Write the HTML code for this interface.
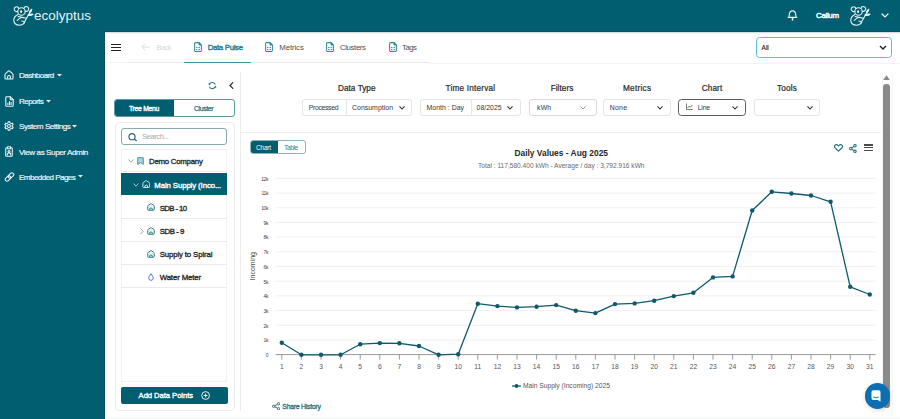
<!DOCTYPE html>
<html><head><meta charset="utf-8">
<style>
*{box-sizing:border-box;margin:0;padding:0}
html,body{width:900px;height:419px;overflow:hidden}
body{position:relative;background:#015e71;font-family:"Liberation Sans",sans-serif;color:#333}
.abs{position:absolute}
.t{position:absolute;white-space:nowrap;line-height:1}
#content{left:105px;top:32px;width:795px;height:387px;background:#fff}
.side{color:#eef5f5;font-size:7.3px;-webkit-text-stroke-width:0.2px}
.box{position:absolute;border:1px solid #e4e4e4;border-radius:3px;background:#fff}
.lbl{font-size:8.1px;font-weight:normal;color:#2a2a2a;-webkit-text-stroke:0.22px #2a2a2a}
.sm{font-size:6.9px;color:#363636}
.sb{font-weight:normal;-webkit-text-stroke-width:0.35px}
.row{position:absolute;left:121px;width:106px;height:23.3px;border-bottom:1px solid #ebebeb}
</style></head><body>
<!-- header -->
<div class="abs" style="left:10px;top:3px;width:26px;height:25px"><svg width="26" height="25" viewBox="0 0 26 25" fill="none" stroke="#e6f2f2" stroke-width="1.1" stroke-linecap="round" stroke-linejoin="round">
<path d="M8.9 5.5 A2.4 2.4 0 1 0 7.7 8.3"/>
<path d="M14 5.3 A2.4 2.4 0 1 1 15.3 8.1"/>
<ellipse cx="11.5" cy="8.5" rx="3.7" ry="3.8"/>
<ellipse cx="11.1" cy="8.7" rx="1.05" ry="1.35" fill="#e6f2f2" stroke="none"/>
<path d="M8 11.6 Q3.6 13.8 3.8 17.6 Q4.2 22.2 9.6 22.2 Q13.2 22.1 14.6 19.6"/>
<path d="M8.2 13.5 Q12 14.4 16.4 15.2"/>
<path d="M7.2 17.4 Q9.4 15.4 11.4 14.6"/>
<path d="M11.8 18 Q13.6 18 14.6 19.6"/>
<path d="M14.2 19.4 L21.2 7"/>
<path d="M19.5 9.6 Q19.9 7.2 21.8 6.2 Q21.7 8.8 19.5 9.6Z"/>
<path d="M18 12.1 Q20.6 10.7 23 11.3 Q20.8 12.9 18 12.1Z"/>
</svg>
</div>
<div class="t" style="left:34px;top:9.20px;font-size:13.5px;color:#e6f2f2">ecolyptus</div>
<svg class="abs" style="left:787px;top:10px" width="11" height="11" viewBox="0 0 11 11" fill="none" stroke="#eef6f6" stroke-width="1.1" stroke-linecap="round" stroke-linejoin="round">
  <path d="M2 7.3 L2.3 4.2 Q2.7 0.9 5.5 0.9 Q8.3 0.9 8.7 4.2 L9 7.3"/><path d="M1.2 7.4 L9.8 7.4"/><path d="M5.5 8.6 L5.5 9.9" stroke-width="1.5"/>
</svg>
<div class="t sb" style="letter-spacing:-0.312px;left:816px;top:12.21px;font-size:7.9px;color:#fff;-webkit-text-stroke-width:0.45px">Callum</div>
<div class="abs" style="left:847px;top:3px;width:26px;height:25px"><svg width="26" height="25" viewBox="0 0 26 25" fill="none" stroke="#e6f2f2" stroke-width="1.1" stroke-linecap="round" stroke-linejoin="round">
<path d="M8.9 5.5 A2.4 2.4 0 1 0 7.7 8.3"/>
<path d="M14 5.3 A2.4 2.4 0 1 1 15.3 8.1"/>
<ellipse cx="11.5" cy="8.5" rx="3.7" ry="3.8"/>
<ellipse cx="11.1" cy="8.7" rx="1.05" ry="1.35" fill="#e6f2f2" stroke="none"/>
<path d="M8 11.6 Q3.6 13.8 3.8 17.6 Q4.2 22.2 9.6 22.2 Q13.2 22.1 14.6 19.6"/>
<path d="M8.2 13.5 Q12 14.4 16.4 15.2"/>
<path d="M7.2 17.4 Q9.4 15.4 11.4 14.6"/>
<path d="M11.8 18 Q13.6 18 14.6 19.6"/>
<path d="M14.2 19.4 L21.2 7"/>
<path d="M19.5 9.6 Q19.9 7.2 21.8 6.2 Q21.7 8.8 19.5 9.6Z"/>
<path d="M18 12.1 Q20.6 10.7 23 11.3 Q20.8 12.9 18 12.1Z"/>
</svg>
</div>
<svg class="abs" style="left:881.2px;top:13.3px" width="8" height="5" viewBox="0 0 8 5" fill="none" stroke="#fff" stroke-width="1.2" stroke-linecap="round"><path d="M1 1 L4 3.9 L7 1"/></svg>

<!-- sidebar -->
<svg class="abs" style="left:4.4px;top:70.3px" width="10" height="10" viewBox="0 0 10 10" fill="none" stroke="#eef6f6" stroke-width="1.1" stroke-linejoin="round"><path d="M1 4.6 Q1 4 1.5 3.6 L4.3 1.2 Q5 0.6 5.7 1.2 L8.5 3.6 Q9 4 9 4.6 L9 8.3 Q9 9 8.3 9 L1.7 9 Q1 9 1 8.3 Z"/><path d="M3.6 9 L3.6 6.7 Q3.6 5.5 5 5.5 Q6.4 5.5 6.4 6.7 L6.4 9"/></svg>
<div class="t side" style="letter-spacing:-0.539px;left:19px;top:72.30px;font-size:8.1px">Dashboard</div>
<svg class="abs" style="left:57.3px;top:74px" width="5" height="3"><path d="M0 0 L5 0 L2.5 2.6Z" fill="#e6f1f2"/></svg>

<svg class="abs" style="left:5px;top:95.6px" width="9" height="11" viewBox="0 0 9 11" fill="none" stroke="#eef6f6" stroke-width="1.1" stroke-linejoin="round" stroke-linecap="round"><path d="M1.6 0.8 L5.3 0.8 L8.2 3.7 L8.2 9.4 Q8.2 10.2 7.4 10.2 L1.6 10.2 Q0.8 10.2 0.8 9.4 L0.8 1.6 Q0.8 0.8 1.6 0.8Z"/><path d="M5.3 0.8 L5.3 3 Q5.3 3.7 6 3.7 L8.2 3.7"/><path d="M2.9 8.4 L2.9 7.2 M4.5 8.4 L4.5 5.6 M6.1 8.4 L6.1 6.6"/></svg>
<div class="t side" style="letter-spacing:-0.607px;left:19px;top:98.02px;font-size:8.1px">Reports</div>
<svg class="abs" style="left:46.3px;top:99.6px" width="5" height="3"><path d="M0 0 L5 0 L2.5 2.6Z" fill="#e6f1f2"/></svg>

<svg class="abs" style="left:3.6px;top:121.4px" width="10" height="10" viewBox="0 0 10 10" fill="none" stroke="#eef6f6" stroke-width="1.05" stroke-linejoin="round"><circle cx="5" cy="5" r="1.5"/><path d="M4.06 1.84 L4.20 0.67 L5.80 0.67 L5.94 1.84 L7.27 2.61 L8.35 2.14 L9.15 3.53 L8.21 4.23 L8.21 5.77 L9.15 6.47 L8.35 7.86 L7.27 7.39 L5.94 8.16 L5.80 9.33 L4.20 9.33 L4.06 8.16 L2.73 7.39 L1.65 7.86 L0.85 6.47 L1.79 5.77 L1.79 4.23 L0.85 3.53 L1.65 2.14 L2.73 2.61Z"/></svg>
<div class="t side" style="letter-spacing:-0.477px;left:19px;top:123.11px;font-size:8.1px">System Settings</div>
<svg class="abs" style="left:72.3px;top:124.8px" width="5" height="3"><path d="M0 0 L5 0 L2.5 2.6Z" fill="#e6f1f2"/></svg>

<svg class="abs" style="left:5.3px;top:146px" width="8" height="11" viewBox="0 0 8 11" fill="none" stroke="#eef6f6" stroke-width="1.05" stroke-linejoin="round" stroke-linecap="round"><path d="M2.4 1.8 L1.5 1.8 Q0.7 1.8 0.7 2.6 L0.7 9.6 Q0.7 10.3 1.5 10.3 L6.5 10.3 Q7.3 10.3 7.3 9.6 L7.3 2.6 Q7.3 1.8 6.5 1.8 L5.6 1.8"/><path d="M2.4 0.7 L5.6 0.7 L5.6 2.8 L2.4 2.8 Z"/><circle cx="4" cy="5.4" r="1"/><path d="M2.3 9 L2.3 8.2 Q2.3 7 4 7 Q5.7 7 5.7 8.2 L5.7 9"/></svg>
<div class="t side" style="letter-spacing:-0.416px;left:19px;top:148.71px;font-size:8.1px">View as Super Admin</div>

<svg class="abs" style="left:4px;top:171.5px" width="11" height="10" viewBox="0 0 11 10" fill="none" stroke="#eef6f6" stroke-width="1.05"><g transform="rotate(-45 5.5 5)"><rect x="0.3" y="3.2" width="6.2" height="3.6" rx="1.8"/><rect x="4.5" y="3.2" width="6.2" height="3.6" rx="1.8"/></g></svg>
<div class="t side" style="letter-spacing:-0.581px;left:19px;top:173.61px;font-size:8.1px">Embedded Pages</div>
<svg class="abs" style="left:77.8px;top:175.2px" width="5" height="3"><path d="M0 0 L5 0 L2.5 2.6Z" fill="#e6f1f2"/></svg>

<!-- content -->
<div id="content" class="abs"></div>
<div class="abs" style="left:104px;top:32px;width:1px;height:387px;background:#02525f"></div>
<div class="abs" style="left:104px;top:31px;width:796px;height:1px;background:#02535f"></div>
<div class="abs" style="left:105px;top:32px;width:795px;height:1px;background:#cfdfe2"></div>
<div class="abs" style="left:105px;top:33px;width:795px;height:1px;background:#f7f5f6"></div>
<!-- tab bar -->
<div class="abs" style="left:111px;top:43.8px;width:10px;height:1.3px;background:#222"></div>
<div class="abs" style="left:111px;top:46.9px;width:10px;height:1.3px;background:#222"></div>
<div class="abs" style="left:111px;top:50px;width:10px;height:1.3px;background:#222"></div>

<div class="abs" style="left:107px;top:62px;width:20px;height:1px;background:#f4f4f4"></div>
<div class="abs" style="left:127px;top:62px;width:303px;height:1px;background:#e9e9e9"></div>
<div class="abs" style="left:430px;top:62.5px;width:470px;height:1px;background:#f3f3f3"></div>
<div class="abs" style="left:184px;top:61.5px;width:67px;height:1.6px;background:#3a93a0"></div>

<svg class="abs" style="left:141px;top:43px" width="9" height="8" viewBox="0 0 9 8" fill="none" stroke="#d8dcdd" stroke-width="1"><path d="M8.5 4 L1 4 M4 0.8 L0.8 4 L4 7.2"/></svg>
<div class="t" style="letter-spacing:-0.715px;left:156.4px;top:43.81px;font-size:7.8px;color:#d6dadb">Back</div>

<svg class="abs" style="left:194.0px;top:42px" width="8" height="10" viewBox="0 0 8 10" fill="none" stroke="#2f8a96" stroke-width="1.05" stroke-linejoin="round"><path d="M1.5 0.6 L5 0.6 L7.4 3 L7.4 8.6 Q7.4 9.4 6.6 9.4 L1.4 9.4 Q0.6 9.4 0.6 8.6 L0.6 1.4 Q0.6 0.6 1.5 0.6Z"/><path d="M5 0.6 L5 2.3 Q5 3 5.7 3 L7.4 3Z" fill="#2f8a96"/><g fill="#2f8a96" stroke="none"><rect x="2.1" y="4.9" width="1.3" height="1.2"/><rect x="4.6" y="4.9" width="1.3" height="1.2"/><rect x="2.1" y="7" width="1.3" height="1.2"/><rect x="4.6" y="7" width="1.3" height="1.2"/></g></svg>
<div class="t sb" style="letter-spacing:-0.316px;left:207.7px;top:43.81px;font-size:7.8px;color:#26808c;-webkit-text-stroke-width:0.4px">Data Pulse</div>

<svg class="abs" style="left:265.3px;top:42px" width="8" height="10" viewBox="0 0 8 10" fill="none" stroke="#2f8a96" stroke-width="1.05" stroke-linejoin="round"><path d="M1.5 0.6 L5 0.6 L7.4 3 L7.4 8.6 Q7.4 9.4 6.6 9.4 L1.4 9.4 Q0.6 9.4 0.6 8.6 L0.6 1.4 Q0.6 0.6 1.5 0.6Z"/><path d="M5 0.6 L5 2.3 Q5 3 5.7 3 L7.4 3Z" fill="#2f8a96"/><g fill="#2f8a96" stroke="none"><rect x="2.1" y="4.9" width="1.3" height="1.2"/><rect x="4.6" y="4.9" width="1.3" height="1.2"/><rect x="2.1" y="7" width="1.3" height="1.2"/><rect x="4.6" y="7" width="1.3" height="1.2"/></g></svg>
<div class="t" style="letter-spacing:-0.104px;left:279.3px;top:43.81px;font-size:7.8px;color:#505050">Metrics</div>

<svg class="abs" style="left:326.3px;top:42px" width="8" height="10" viewBox="0 0 8 10" fill="none" stroke="#2f8a96" stroke-width="1.05" stroke-linejoin="round"><path d="M1.5 0.6 L5 0.6 L7.4 3 L7.4 8.6 Q7.4 9.4 6.6 9.4 L1.4 9.4 Q0.6 9.4 0.6 8.6 L0.6 1.4 Q0.6 0.6 1.5 0.6Z"/><path d="M5 0.6 L5 2.3 Q5 3 5.7 3 L7.4 3Z" fill="#2f8a96"/><g fill="#2f8a96" stroke="none"><rect x="2.1" y="4.9" width="1.3" height="1.2"/><rect x="4.6" y="4.9" width="1.3" height="1.2"/><rect x="2.1" y="7" width="1.3" height="1.2"/><rect x="4.6" y="7" width="1.3" height="1.2"/></g></svg>
<div class="t" style="letter-spacing:-0.373px;left:340px;top:43.81px;font-size:7.8px;color:#505050">Clusters</div>

<svg class="abs" style="left:388.5px;top:42px" width="8" height="10" viewBox="0 0 8 10" fill="none" stroke="#2f8a96" stroke-width="1.05" stroke-linejoin="round"><path d="M1.5 0.6 L5 0.6 L7.4 3 L7.4 8.6 Q7.4 9.4 6.6 9.4 L1.4 9.4 Q0.6 9.4 0.6 8.6 L0.6 1.4 Q0.6 0.6 1.5 0.6Z"/><path d="M5 0.6 L5 2.3 Q5 3 5.7 3 L7.4 3Z" fill="#2f8a96"/><g fill="#2f8a96" stroke="none"><rect x="2.1" y="4.9" width="1.3" height="1.2"/><rect x="4.6" y="4.9" width="1.3" height="1.2"/><rect x="2.1" y="7" width="1.3" height="1.2"/><rect x="4.6" y="7" width="1.3" height="1.2"/></g></svg>
<div class="t" style="letter-spacing:-0.495px;left:402px;top:43.81px;font-size:7.8px;color:#505050">Tags</div>

<div class="abs" style="left:756.1px;top:37.1px;width:136.4px;height:20.9px;border:1.5px solid #58c3d0;border-radius:3.5px"></div>
<div class="t" style="left:761.6px;top:44.91px;font-size:6.5px;color:#222;-webkit-text-stroke:0.15px #222">All</div>
<svg class="abs" style="left:878.5px;top:45.3px" width="8" height="5" viewBox="0 0 8 5" fill="none" stroke="#222" stroke-width="1.4"><path d="M1 1 L4 4 L7 1"/></svg>

<!-- tree panel -->
<svg class="abs" style="left:207.5px;top:80.5px" width="9" height="9" viewBox="0 0 9 9" fill="none" stroke="#2b7a86" stroke-width="1.1"><path d="M7.35 3.46 A3.2 3.2 0 0 0 1.6 3.1"/><path d="M1.35 5.64 A3.2 3.2 0 0 0 7.1 6"/><path d="M0.3 2.2 L2.9 2.6 L1.2 4.5Z" fill="#2b7a86" stroke="none"/><path d="M8.5 6.8 L5.9 6.4 L7.6 4.5Z" fill="#2b7a86" stroke="none"/></svg>
<svg class="abs" style="left:229px;top:82px" width="5" height="7" viewBox="0 0 5 7" fill="none" stroke="#222" stroke-width="1.15" stroke-linecap="round"><path d="M3.8 0.7 L0.9 3.5 L3.8 6.3"/></svg>

<div class="abs" style="left:114px;top:99px;width:120.5px;height:18px;border:1px solid #5e9aa3;border-radius:3px;overflow:hidden">
  <div class="abs" style="left:0;top:0;width:59px;height:18px;background:#015e71"></div>
</div>
<div class="t sb" style="letter-spacing:-0.291px;left:129px;top:105.70px;font-size:6.8px;color:#fff">Tree Menu</div>
<div class="t" style="letter-spacing:-0.388px;left:194px;top:105.81px;font-size:6.9px;color:#2a6f7a;-webkit-text-stroke:0.25px #2a6f7a">Cluster</div>

<div class="abs" style="left:114.5px;top:121.7px;width:120px;height:289px;border:1px solid #ececec;border-radius:4px"></div>
<div class="abs" style="left:121.2px;top:128.2px;width:106.3px;height:16.6px;border:1px solid #86aaae;border-radius:3px"></div>
<svg class="abs" style="left:127.5px;top:132.7px" width="10" height="9" viewBox="0 0 10 9" fill="none" stroke="#1f5e6a" stroke-width="1.1"><circle cx="4" cy="3.7" r="3.1"/><path d="M6.3 5.9 L8.6 8"/></svg>
<div class="t" style="letter-spacing:-0.414px;left:142.2px;top:133.40px;font-size:7.5px;color:#a9a9a9">Search...</div>

<div class="abs" style="left:121.2px;top:149.2px;width:106px;height:233px;border:1px solid #f2f2f2"></div>
<div class="row" style="top:149.2px"></div>
<svg class="abs" style="left:127.6px;top:159.3px" width="6" height="4" viewBox="0 0 6 4" fill="none" stroke="#9a9a9a" stroke-width="0.9"><path d="M0.5 0.5 L3 3.2 L5.5 0.5"/></svg>
<svg class="abs" style="left:137.2px;top:157.2px" width="7" height="8" viewBox="0 0 7 8" fill="none" stroke="#3b8f9c" stroke-width="0.9" stroke-linejoin="round"><path d="M0.7 0.7 L6.3 0.7 L6.3 7.4 L3.5 5.6 L0.7 7.4 Z" fill="#a9d4dc"/></svg>
<div class="t sb" style="letter-spacing:-0.231px;left:149px;top:158.21px;font-size:7.8px;color:#2a2a2a">Demo Company</div>

<div class="abs" style="left:121.2px;top:172.7px;width:106.2px;height:22.5px;background:#015e71"></div>
<svg class="abs" style="left:133px;top:183px" width="6" height="4" viewBox="0 0 6 4" fill="none" stroke="#b9d4d8" stroke-width="0.9"><path d="M0.5 0.5 L3 3.2 L5.5 0.5"/></svg>
<svg class="abs" style="left:141.9px;top:180.2px" width="8.5" height="8.2" viewBox="0 0 8 8" fill="none" stroke="#e9f3f4" stroke-width="0.9" stroke-linejoin="round"><path d="M0.7 3.4 Q0.7 2.8 1.2 2.4 L3.4 0.9 Q4 0.5 4.6 0.9 L6.8 2.4 Q7.3 2.8 7.3 3.4 L7.3 6.5 Q7.3 7.3 6.5 7.3 L1.5 7.3 Q0.7 7.3 0.7 6.5 Z" fill="none"/><path d="M2.7 7.3 L2.7 5.6 Q4 4.3 5.3 5.6 L5.3 7.3"/></svg>
<div class="t sb" style="letter-spacing:-0.106px;left:154.3px;top:181.51px;font-size:7.8px;color:#fff">Main Supply (Inco...</div>

<div class="row" style="top:195.3px"></div>
<svg class="abs" style="left:147.1px;top:203.4px" width="8" height="8" viewBox="0 0 8 8" fill="none" stroke="#3a8589" stroke-width="1" stroke-linejoin="round"><path d="M0.7 3.4 Q0.7 2.8 1.2 2.4 L3.4 0.9 Q4 0.5 4.6 0.9 L6.8 2.4 Q7.3 2.8 7.3 3.4 L7.3 6.5 Q7.3 7.3 6.5 7.3 L1.5 7.3 Q0.7 7.3 0.7 6.5 Z" fill="#e6f2f2"/><path d="M2.7 7.3 L2.7 5.6 Q4 4.3 5.3 5.6 L5.3 7.3"/></svg>
<div class="t sb" style="letter-spacing:-0.606px;left:159.7px;top:204.81px;font-size:7.8px;color:#2a2a2a">SDB - 10</div>
<div class="row" style="top:218.6px"></div>
<svg class="abs" style="left:139.5px;top:228.2px" width="4" height="7" viewBox="0 0 4 7" fill="none" stroke="#999" stroke-width="0.9"><path d="M0.6 0.6 L3.2 3.3 L0.6 6"/></svg>
<svg class="abs" style="left:147.1px;top:226.7px" width="8" height="8" viewBox="0 0 8 8" fill="none" stroke="#3a8589" stroke-width="1" stroke-linejoin="round"><path d="M0.7 3.4 Q0.7 2.8 1.2 2.4 L3.4 0.9 Q4 0.5 4.6 0.9 L6.8 2.4 Q7.3 2.8 7.3 3.4 L7.3 6.5 Q7.3 7.3 6.5 7.3 L1.5 7.3 Q0.7 7.3 0.7 6.5 Z" fill="#e6f2f2"/><path d="M2.7 7.3 L2.7 5.6 Q4 4.3 5.3 5.6 L5.3 7.3"/></svg>
<div class="t sb" style="letter-spacing:-0.433px;left:159.7px;top:228.01px;font-size:7.8px;color:#2a2a2a">SDB - 9</div>
<div class="row" style="top:241.9px"></div>
<svg class="abs" style="left:147.1px;top:250.0px" width="8" height="8" viewBox="0 0 8 8" fill="none" stroke="#3a8589" stroke-width="1" stroke-linejoin="round"><path d="M0.7 3.4 Q0.7 2.8 1.2 2.4 L3.4 0.9 Q4 0.5 4.6 0.9 L6.8 2.4 Q7.3 2.8 7.3 3.4 L7.3 6.5 Q7.3 7.3 6.5 7.3 L1.5 7.3 Q0.7 7.3 0.7 6.5 Z" fill="#e6f2f2"/><path d="M2.7 7.3 L2.7 5.6 Q4 4.3 5.3 5.6 L5.3 7.3"/></svg>
<div class="t sb" style="letter-spacing:-0.127px;left:159.7px;top:251.21px;font-size:7.8px;color:#2a2a2a">Supply to Spiral</div>

<div class="row" style="top:265.2px"></div>
<svg class="abs" style="left:148px;top:272.8px" width="6" height="8" viewBox="0 0 6 8" fill="none" stroke="#3a6fd0" stroke-width="0.9"><path d="M3 0.7 Q0.6 3.8 0.7 5 Q0.8 7.3 3 7.3 Q5.2 7.3 5.3 5 Q5.4 3.8 3 0.7Z"/></svg>
<div class="t sb" style="letter-spacing:-0.111px;left:159.7px;top:274.40px;font-size:7.8px;color:#2a2a2a">Water Meter</div>

<div class="abs" style="left:121px;top:387.1px;width:106.5px;height:16.7px;background:#015e71;border-radius:2px"></div>
<div class="t sb" style="letter-spacing:-0.028px;left:138.6px;top:392.11px;font-size:7.6px;color:#fff">Add Data Points</div>
<svg class="abs" style="left:200.7px;top:391px" width="9.2" height="9" viewBox="0 0 9 9" fill="none" stroke="#fff" stroke-width="0.9"><circle cx="4.5" cy="4.5" r="3.9"/><path d="M4.5 2.6 L4.5 6.4 M2.6 4.5 L6.4 4.5"/></svg>

<!-- main panel -->
<div class="abs" style="left:240px;top:71.5px;width:1px;height:339px;background:#ececec"></div>
<div class="abs" style="left:241px;top:132px;width:640px;height:1px;background:#eeeeee"></div>

<div class="t lbl" style="letter-spacing:0.041px;left:338px;top:85.10px;font-size:8.2px">Data Type</div>
<div class="box" style="left:301.5px;top:98.9px;width:110.2px;height:16.7px"></div>
<div class="abs" style="left:345.6px;top:98.9px;width:1px;height:16.7px;background:#e6e6e6"></div>
<div class="t sm" style="letter-spacing:-0.339px;left:308.7px;top:105.00px;font-size:6.9px">Processed</div>
<div class="t sm" style="letter-spacing:0.039px;left:352px;top:105.00px;font-size:6.9px">Consumption</div>
<svg class="abs" style="left:398.8px;top:106px" width="6" height="4" viewBox="0 0 6 4" fill="none" stroke="#333" stroke-width="1.05" stroke-linecap="round"><path d="M0.7 0.7 L3 3 L5.3 0.7"/></svg>

<div class="t lbl" style="letter-spacing:0.215px;left:445.6px;top:85.10px;font-size:8.2px">Time Interval</div>
<div class="box" style="left:419.6px;top:98.9px;width:101px;height:16.7px"></div>
<div class="abs" style="left:470.5px;top:98.9px;width:1px;height:16.7px;background:#e6e6e6"></div>
<div class="t sm" style="letter-spacing:0.024px;left:426.6px;top:105.00px;font-size:6.9px">Month : Day</div>
<div class="t sm" style="letter-spacing:0.013px;left:476.6px;top:105.00px;font-size:6.9px">08/2025</div>
<svg class="abs" style="left:506.9px;top:106px" width="6" height="4" viewBox="0 0 6 4" fill="none" stroke="#333" stroke-width="1.05" stroke-linecap="round"><path d="M0.7 0.7 L3 3 L5.3 0.7"/></svg>

<div class="t lbl" style="letter-spacing:0.051px;left:550.7px;top:85.10px;font-size:8.2px">Filters</div>
<div class="box" style="left:528.6px;top:98.9px;width:68.3px;height:16.7px;border-color:#d9d9d9"></div>
<div class="t sm" style="letter-spacing:0.202px;left:537px;top:105.00px;font-size:6.9px">kWh</div>
<svg class="abs" style="left:580.3px;top:106px" width="6" height="4" viewBox="0 0 6 4" fill="none" stroke="#8a8a8a" stroke-width="0.9" stroke-linecap="round"><path d="M0.7 0.7 L3 3 L5.3 0.7"/></svg>

<div class="t lbl" style="letter-spacing:0.268px;left:623px;top:85.10px;font-size:8.2px">Metrics</div>
<div class="box" style="left:603px;top:98.9px;width:67.5px;height:16.7px"></div>
<div class="t sm" style="letter-spacing:0.272px;left:609.7px;top:105.00px;font-size:6.9px">None</div>
<svg class="abs" style="left:656.5px;top:106px" width="6" height="4" viewBox="0 0 6 4" fill="none" stroke="#333" stroke-width="1.05" stroke-linecap="round"><path d="M0.7 0.7 L3 3 L5.3 0.7"/></svg>

<div class="t lbl" style="letter-spacing:0.117px;left:701.7px;top:85.10px;font-size:8.2px">Chart</div>
<div class="box" style="left:677.6px;top:98.5px;width:68.2px;height:17.2px;border:1.5px solid #5a5a5a;border-radius:3.5px"></div>
<svg class="abs" style="left:685.5px;top:103.3px" width="7" height="7" viewBox="0 0 7 7" fill="none" stroke="#555" stroke-width="0.8"><path d="M0.5 0.5 L0.5 6.5 L6.5 6.5 M1.6 5 L3 3.2 L4.5 4.2 L6.3 2"/></svg>
<div class="t sm" style="letter-spacing:-0.177px;left:697.7px;top:105.00px;font-size:6.9px">Line</div>
<svg class="abs" style="left:732px;top:106px" width="6" height="4" viewBox="0 0 6 4" fill="none" stroke="#333" stroke-width="1.05" stroke-linecap="round"><path d="M0.7 0.7 L3 3 L5.3 0.7"/></svg>

<div class="t lbl" style="letter-spacing:0.194px;left:777px;top:85.10px;font-size:8.2px">Tools</div>
<div class="box" style="left:753.7px;top:98.9px;width:66.6px;height:16.7px"></div>
<svg class="abs" style="left:806.6px;top:106px" width="6" height="4" viewBox="0 0 6 4" fill="none" stroke="#333" stroke-width="1.05" stroke-linecap="round"><path d="M0.7 0.7 L3 3 L5.3 0.7"/></svg>

<!-- chart card -->
<div class="abs" style="left:249.5px;top:140.3px;width:56px;height:13.9px;border:1px solid #8fb2b7;border-radius:3px;overflow:hidden">
  <div class="abs" style="left:0;top:0;width:27.6px;height:13.9px;background:#015e71"></div>
</div>
<div class="t" style="letter-spacing:-0.202px;left:256px;top:145.41px;font-size:6.5px;color:#fff">Chart</div>
<div class="t" style="letter-spacing:-0.462px;left:284px;top:145.41px;font-size:6.8px;color:#3f7e88">Table</div>

<div class="t" style="left:514.4px;top:149.00px;font-size:8.41px;font-weight:bold;color:#262626">Daily Values - Aug 2025</div>
<div class="t" style="left:478px;top:163.00px;font-size:6.6px;color:#6a6a6a">Total : 117,580.400 kWh - Average / day : 3,792.916 kWh</div>

<svg class="abs" style="left:834px;top:144px" width="9" height="8" viewBox="0 0 9 8" fill="none" stroke="#246f7b" stroke-width="1.1" stroke-linejoin="round"><path d="M4.5 7.2 L1.2 4 Q0 2.6 0.9 1.3 Q2.4 -0.2 4.5 1.8 Q6.6 -0.2 8.1 1.3 Q9 2.6 7.8 4 Z"/></svg>
<svg class="abs" style="left:848.5px;top:143.5px" width="8" height="9" viewBox="0 0 8 9" fill="none" stroke="#246f7b" stroke-width="1.05"><circle cx="6" cy="1.7" r="1.2"/><circle cx="6" cy="7.3" r="1.2"/><circle cx="1.8" cy="4.5" r="1.2"/><path d="M2.8 3.9 L5 2.3 M2.8 5.1 L5 6.7"/></svg>
<div class="abs" style="left:864.4px;top:144px;width:8.7px;height:1.5px;background:#4a4a4a"></div>
<div class="abs" style="left:864.4px;top:146.8px;width:8.7px;height:1.5px;background:#4a4a4a"></div>
<div class="abs" style="left:864.4px;top:149.7px;width:8.7px;height:1.5px;background:#4a4a4a"></div>

<svg class="abs" style="left:0;top:0" width="900" height="419" viewBox="0 0 900 419">
<g stroke="#f1f1f1" stroke-width="1"><line x1="275.6" x2="875.7" y1="339.92" y2="339.92"/><line x1="275.6" x2="875.7" y1="325.24" y2="325.24"/><line x1="275.6" x2="875.7" y1="310.56" y2="310.56"/><line x1="275.6" x2="875.7" y1="295.88" y2="295.88"/><line x1="275.6" x2="875.7" y1="281.20" y2="281.20"/><line x1="275.6" x2="875.7" y1="266.52" y2="266.52"/><line x1="275.6" x2="875.7" y1="251.84" y2="251.84"/><line x1="275.6" x2="875.7" y1="237.16" y2="237.16"/><line x1="275.6" x2="875.7" y1="222.48" y2="222.48"/><line x1="275.6" x2="875.7" y1="207.80" y2="207.80"/><line x1="275.6" x2="875.7" y1="193.12" y2="193.12"/><line x1="275.6" x2="875.7" y1="178.44" y2="178.44"/></g>
<g stroke="#9a9a9a" stroke-width="1"><line x1="275.6" x2="875.7" y1="354.6" y2="354.6"/><line x1="281.8" x2="281.8" y1="354.6" y2="359.6"/><line x1="301.4" x2="301.4" y1="354.6" y2="359.6"/><line x1="321.0" x2="321.0" y1="354.6" y2="359.6"/><line x1="340.6" x2="340.6" y1="354.6" y2="359.6"/><line x1="360.2" x2="360.2" y1="354.6" y2="359.6"/><line x1="379.8" x2="379.8" y1="354.6" y2="359.6"/><line x1="399.4" x2="399.4" y1="354.6" y2="359.6"/><line x1="419.0" x2="419.0" y1="354.6" y2="359.6"/><line x1="438.6" x2="438.6" y1="354.6" y2="359.6"/><line x1="458.2" x2="458.2" y1="354.6" y2="359.6"/><line x1="477.8" x2="477.8" y1="354.6" y2="359.6"/><line x1="497.4" x2="497.4" y1="354.6" y2="359.6"/><line x1="517.0" x2="517.0" y1="354.6" y2="359.6"/><line x1="536.6" x2="536.6" y1="354.6" y2="359.6"/><line x1="556.2" x2="556.2" y1="354.6" y2="359.6"/><line x1="575.8" x2="575.8" y1="354.6" y2="359.6"/><line x1="595.4" x2="595.4" y1="354.6" y2="359.6"/><line x1="615.0" x2="615.0" y1="354.6" y2="359.6"/><line x1="634.6" x2="634.6" y1="354.6" y2="359.6"/><line x1="654.2" x2="654.2" y1="354.6" y2="359.6"/><line x1="673.8" x2="673.8" y1="354.6" y2="359.6"/><line x1="693.4" x2="693.4" y1="354.6" y2="359.6"/><line x1="713.0" x2="713.0" y1="354.6" y2="359.6"/><line x1="732.6" x2="732.6" y1="354.6" y2="359.6"/><line x1="752.2" x2="752.2" y1="354.6" y2="359.6"/><line x1="771.8" x2="771.8" y1="354.6" y2="359.6"/><line x1="791.4" x2="791.4" y1="354.6" y2="359.6"/><line x1="811.0" x2="811.0" y1="354.6" y2="359.6"/><line x1="830.6" x2="830.6" y1="354.6" y2="359.6"/><line x1="850.2" x2="850.2" y1="354.6" y2="359.6"/><line x1="869.8" x2="869.8" y1="354.6" y2="359.6"/></g>
<g font-family="Liberation Sans" font-size="5" letter-spacing="-0.3" fill="#444" text-anchor="end"><text x="268.3" y="342.22">1k</text><text x="268.3" y="327.54">2k</text><text x="268.3" y="312.86">3k</text><text x="268.3" y="298.18">4k</text><text x="268.3" y="283.50">5k</text><text x="268.3" y="268.82">6k</text><text x="268.3" y="254.14">7k</text><text x="268.3" y="239.46">8k</text><text x="268.3" y="224.78">9k</text><text x="268.3" y="210.10">10k</text><text x="268.3" y="195.42">11k</text><text x="268.3" y="180.74">12k</text><text x="268.3" y="356.90">0</text></g>
<g font-family="Liberation Sans" font-size="6.7" fill="#555" text-anchor="middle"><text x="281.8" y="369">1</text><text x="301.4" y="369">2</text><text x="321.0" y="369">3</text><text x="340.6" y="369">4</text><text x="360.2" y="369">5</text><text x="379.8" y="369">6</text><text x="399.4" y="369">7</text><text x="419.0" y="369">8</text><text x="438.6" y="369">9</text><text x="458.2" y="369">10</text><text x="477.8" y="369">11</text><text x="497.4" y="369">12</text><text x="517.0" y="369">13</text><text x="536.6" y="369">14</text><text x="556.2" y="369">15</text><text x="575.8" y="369">16</text><text x="595.4" y="369">17</text><text x="615.0" y="369">18</text><text x="634.6" y="369">19</text><text x="654.2" y="369">20</text><text x="673.8" y="369">21</text><text x="693.4" y="369">22</text><text x="713.0" y="369">23</text><text x="732.6" y="369">24</text><text x="752.2" y="369">25</text><text x="771.8" y="369">26</text><text x="791.4" y="369">27</text><text x="811.0" y="369">28</text><text x="830.6" y="369">29</text><text x="850.2" y="369">30</text><text x="869.8" y="369">31</text></g>
<polyline points="281.8,342.8 301.4,354.8 321.0,354.8 340.6,354.8 360.2,344.2 379.8,343.1 399.4,343.3 419.0,346.0 438.6,354.8 458.2,354.2 477.8,303.7 497.4,306.1 517.0,307.4 536.6,306.7 556.2,305.1 575.8,310.7 595.4,313.1 615.0,304.1 634.6,303.4 654.2,300.7 673.8,296.1 693.4,292.8 713.0,277.4 732.6,276.4 752.2,210.5 771.8,191.8 791.4,193.5 811.0,195.5 830.6,201.8 850.2,286.8 869.8,294.5" fill="none" stroke="#0e5a6c" stroke-width="1.3" stroke-linejoin="round"/>
<g fill="#0e5a6c"><circle cx="281.8" cy="342.8" r="2.2"/><circle cx="301.4" cy="354.8" r="2.2"/><circle cx="321.0" cy="354.8" r="2.2"/><circle cx="340.6" cy="354.8" r="2.2"/><circle cx="360.2" cy="344.2" r="2.2"/><circle cx="379.8" cy="343.1" r="2.2"/><circle cx="399.4" cy="343.3" r="2.2"/><circle cx="419.0" cy="346.0" r="2.2"/><circle cx="438.6" cy="354.8" r="2.2"/><circle cx="458.2" cy="354.2" r="2.2"/><circle cx="477.8" cy="303.7" r="2.2"/><circle cx="497.4" cy="306.1" r="2.2"/><circle cx="517.0" cy="307.4" r="2.2"/><circle cx="536.6" cy="306.7" r="2.2"/><circle cx="556.2" cy="305.1" r="2.2"/><circle cx="575.8" cy="310.7" r="2.2"/><circle cx="595.4" cy="313.1" r="2.2"/><circle cx="615.0" cy="304.1" r="2.2"/><circle cx="634.6" cy="303.4" r="2.2"/><circle cx="654.2" cy="300.7" r="2.2"/><circle cx="673.8" cy="296.1" r="2.2"/><circle cx="693.4" cy="292.8" r="2.2"/><circle cx="713.0" cy="277.4" r="2.2"/><circle cx="732.6" cy="276.4" r="2.2"/><circle cx="752.2" cy="210.5" r="2.2"/><circle cx="771.8" cy="191.8" r="2.2"/><circle cx="791.4" cy="193.5" r="2.2"/><circle cx="811.0" cy="195.5" r="2.2"/><circle cx="830.6" cy="201.8" r="2.2"/><circle cx="850.2" cy="286.8" r="2.2"/><circle cx="869.8" cy="294.5" r="2.2"/></g>
<text x="255.5" y="266.2" transform="rotate(-90 255.5 266.2)" font-family="Liberation Sans" font-size="7" fill="#444" text-anchor="middle">Incoming</text>
</svg>

<svg class="abs" style="left:511.5px;top:383.5px" width="9" height="4" viewBox="0 0 9 4"><path d="M0 2 L9 2" stroke="#0e5a6c" stroke-width="1.3"/><circle cx="4.5" cy="2" r="1.9" fill="#0e5a6c"/></svg>
<div class="t" style="left:522.9px;top:382.91px;font-size:6.7px;color:#555">Main Supply (Incoming) 2025</div>

<svg class="abs" style="left:271.5px;top:401.8px" width="8.5" height="8.5" viewBox="0 0 8.5 8.5" fill="none" stroke="#2b6f7a" stroke-width="1"><circle cx="6.6" cy="1.7" r="1.2"/><circle cx="6.6" cy="6.8" r="1.2"/><circle cx="1.7" cy="4.25" r="1.2"/><path d="M2.8 3.7 L5.5 2.3 M2.8 4.8 L5.5 6.2"/></svg>
<div class="t" style="letter-spacing:-0.254px;left:282.3px;top:404.20px;font-size:6.9px;color:#2b6f7a;-webkit-text-stroke:0.3px #2b6f7a">Share History</div>

<!-- scrollbar -->
<div class="abs" style="left:881.5px;top:71.5px;width:11px;height:345px;background:#fcfcfc;border-left:1px solid #f6f6f6;border-right:1px solid #f6f6f6"></div>
<svg class="abs" style="left:883px;top:74.5px" width="7" height="5.5" viewBox="0 0 7 5.5"><path d="M0 5.2 L3.5 0.3 L7 5.2Z" fill="#888"/></svg>
<div class="abs" style="left:883.4px;top:84px;width:6.4px;height:324px;background:#8a8a8a;border-radius:3.2px"></div>

<!-- chat bubble -->
<div class="abs" style="left:865px;top:383.4px;width:25.3px;height:25.3px;border-radius:50%;background:#0b6fb2;box-shadow:0 1px 4px rgba(0,0,0,0.15)"></div>
<svg class="abs" style="left:871.4px;top:389.8px" width="10" height="12" viewBox="0 0 10 12"><path d="M2.2 0.3 L7.8 0.3 Q9.5 0.3 9.5 2 L9.5 11.7 L7 10 L2.2 10 Q0.5 10 0.5 8.3 L0.5 2 Q0.5 0.3 2.2 0.3Z" fill="#fff"/><path d="M2.2 7 Q5 8.6 7.8 7" fill="none" stroke="#0b6fb2" stroke-width="0.9"/></svg>

<div class="abs" style="left:105px;top:416px;width:795px;height:3px;background:linear-gradient(#fff,#f3f5f5)"></div>
</body></html>
